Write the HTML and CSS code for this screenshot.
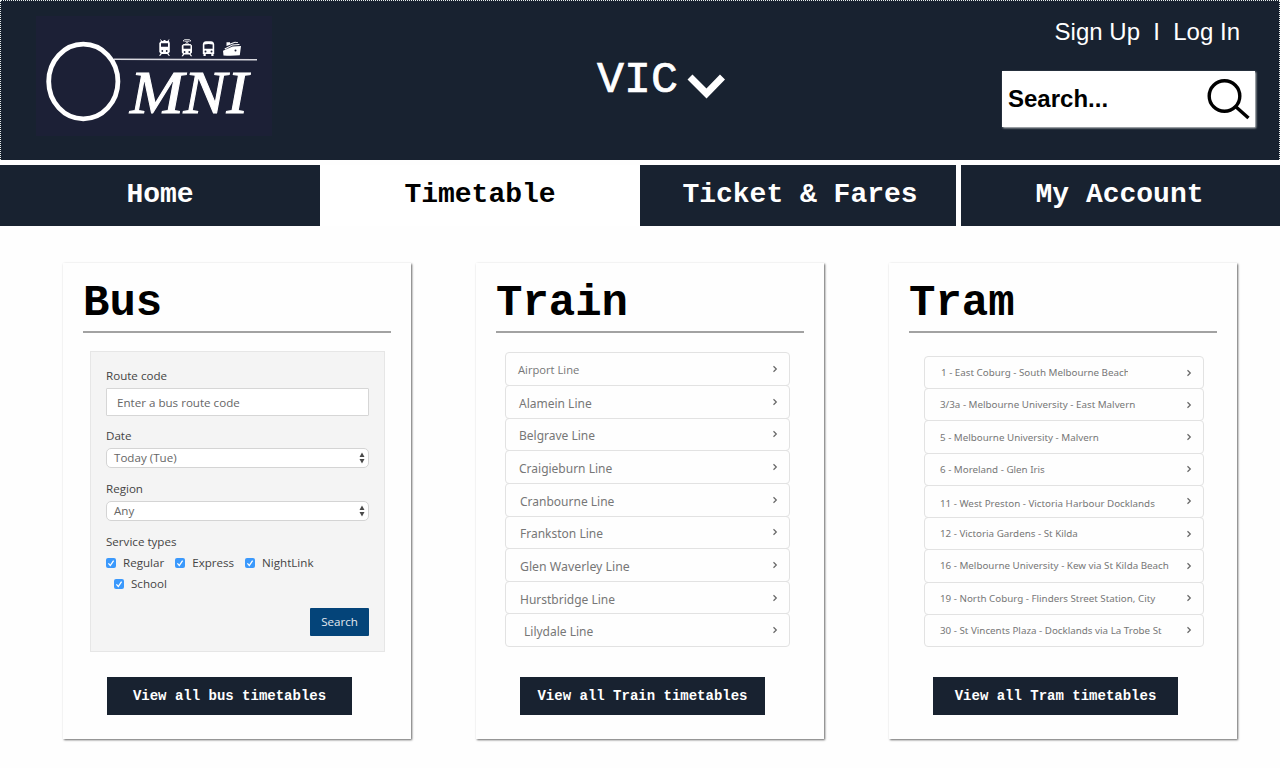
FILE: index.html
```html
<!DOCTYPE html>
<html lang="en">
<head>
<meta charset="utf-8">
<title>OMNI - Timetable</title>
<link rel="stylesheet" href="styles.css">
</head>
<body>
<svg width="0" height="0" class="defs">
  <symbol id="chev" viewBox="0 0 8 10"><path d="M2.500 2.300l2.800 2.700L2.500 7.700" fill="none" stroke="#666" stroke-width="1.2"/></symbol>
  <symbol id="tick" viewBox="0 0 10 10"><rect width="10" height="10" rx="2" fill="#3b99fc"/><path d="M2.400 5.400l1.900 2.100L7.600 2.600" fill="none" stroke="#fff" stroke-width="1.3"/></symbol>
  <symbol id="updown" viewBox="0 0 6 12"><path d="M3 .6L5.500 4.900H.5zM3 11.400L.5 7.100h5z" fill="#4a4a4a"/></symbol>
</svg>
<header class="header">
  <svg class="logo" viewBox="36 16 236 120" width="236" height="120">
    <rect x="36" y="16" width="236" height="120" fill="#1c2036"/>
    <ellipse cx="83.300" cy="81.500" rx="34.600" ry="37.300" fill="none" stroke="#fff" stroke-width="4.800"/>
    <path d="M114 59.300L257 59.800" stroke="#d8d8df" stroke-width="1.500"/>
    <text x="130" y="112.500" class="logo-text" textLength="118" lengthAdjust="spacingAndGlyphs">MNI</text>
    <g fill="#fff">
      <path d="M161 41h8l.8 2v9l-1.500 1.500 1.700 2.300h-1.400L167.300 54h-5.600L160.500 55.800H159l1.600-2.300L159.300 52v-9zM161 43.200v3.600h7v-3.600z" fill-rule="evenodd"/>
      <path d="M161.500 41l-1-1.500M168 41l1-1.500M163.500 40.500h2" stroke="#fff"/>
      <path d="M183.500 44h7l1.500 1.500v7L190.600 54l1.600 2.300h-1.400L189.500 54.500h-5.300L183 56.300h-1.500l1.500-2.300-1.200-1.500v-7zM183.500 45.500v3.200h7v-3.200z" fill-rule="evenodd"/>
      <path d="M184.500 39.500h5l1.500 1.500h-8z" stroke="#fff" stroke-width=".7" fill="none"/><path d="M185.500 41l1.500 1.500-1.500 1.500M188.500 41L187 42.500l1.500 1.500" stroke="#fff" stroke-width=".9" fill="none"/>
      <path d="M206 41.200h5q2.700 0 3.200 3V54h-.7v2h-2.200v-2h-5.600v2h-2.200v-2h-.7v-9.800q.5-3 3.200-3zM204.400 44.500v4.300h8.200v-4.300q-4-1.200-8.200 0z" fill-rule="evenodd"/>
      <path d="M223 50.800l9.500-4.300 8.500-.5-1.200 9.200q-7 .8-16.300.3zM224.500 48.500l8-4 7-.4v1l-7 .4-7.500 3.900zM226.500 46v-3.700h3.500v1.200l5-1.800 3 .5v.8l-3-.2-5 2z"/>
    </g>
    <g fill="#1c2036"><circle cx="162.300" cy="51" r=".9"/><circle cx="166.700" cy="51" r=".9"/><circle cx="184.600" cy="52" r=".9"/><circle cx="189.300" cy="52" r=".9"/><circle cx="205.500" cy="51.500" r="1"/><circle cx="211.500" cy="51.500" r="1"/><circle cx="235.500" cy="50.500" r="1"/></g>
  </svg>
  <div class="state"><span>VIC</span>
    <svg width="38" height="26" viewBox="0 0 38 26"><path d="M3 4L19.500 20.500 35.500 4" fill="none" stroke="#fff" stroke-width="7"/></svg>
  </div>
  <div class="tools">
    <div class="auth"><a>Sign Up</a><span>I</span><a>Log In</a></div>
    <div class="search"><span>Search...</span>
      <svg width="44" height="42" viewBox="0 0 44 42"><circle cx="18.500" cy="18" r="15.300" fill="none" stroke="#000" stroke-width="3.400"/><path d="M29.500 28.500L42.500 40" stroke="#000" stroke-width="3.400"/></svg>
    </div>
  </div>
</header>
<nav class="nav"><a>Home</a><a class="active">Timetable</a><a class="tickets">Ticket &amp; Fares</a><a>My Account</a></nav>
<main class="cards">
  <section class="card">
    <h2>Bus</h2>
    <div class="content">
      <form class="panel">
        <label>Route code</label>
        <div class="input">Enter a bus route code</div>
        <label class="lb-date">Date</label>
        <div class="select">Today (Tue)<svg width="6" height="12"><use href="#updown"/></svg></div>
        <label class="lb-region">Region</label>
        <div class="select">Any<svg width="6" height="12"><use href="#updown"/></svg></div>
        <label class="lb-types">Service types</label>
        <div class="checks">
          <span><svg width="10" height="10"><use href="#tick"/></svg>Regular</span>
          <span><svg width="10" height="10"><use href="#tick"/></svg>Express</span>
          <span><svg width="10" height="10"><use href="#tick"/></svg>NightLink</span>
        </div>
        <div class="checks second"><span><svg width="10" height="10"><use href="#tick"/></svg>School</span></div>
        <div class="submit">Search</div>
      </form>
    </div>
    <a class="button">View all bus timetables</a>
  </section>
  <section class="card">
    <h2>Train</h2>
    <div class="content">
      <ul class="list train">
        <li class="airport"><span>Airport Line</span><svg width="8" height="10"><use href="#chev"/></svg></li>
        <li><span>Alamein Line</span><svg width="8" height="10"><use href="#chev"/></svg></li>
        <li><span>Belgrave Line</span><svg width="8" height="10"><use href="#chev"/></svg></li>
        <li><span>Craigieburn Line</span><svg width="8" height="10"><use href="#chev"/></svg></li>
        <li class="inset"><span>Cranbourne Line</span><svg width="8" height="10"><use href="#chev"/></svg></li>
        <li class="inset"><span>Frankston Line</span><svg width="8" height="10"><use href="#chev"/></svg></li>
        <li class="inset wide"><span>Glen Waverley Line</span><svg width="8" height="10"><use href="#chev"/></svg></li>
        <li class="inset"><span>Hurstbridge Line</span><svg width="8" height="10"><use href="#chev"/></svg></li>
        <li class="lilydale"><span>Lilydale Line</span><svg width="8" height="10"><use href="#chev"/></svg></li>
      </ul>
    </div>
    <a class="button">View all Train timetables</a>
  </section>
  <section class="card">
    <h2>Tram</h2>
    <div class="content">
      <ul class="list tram">
        <li class="clipped"><span>1 - East Coburg - South Melbourne Beach</span><svg width="8" height="10"><use href="#chev"/></svg></li>
        <li><span>3/3a - Melbourne University - East Malvern</span><svg width="8" height="10"><use href="#chev"/></svg></li>
        <li><span>5 - Melbourne University - Malvern</span><svg width="8" height="10"><use href="#chev"/></svg></li>
        <li><span>6 - Moreland - Glen Iris</span><svg width="8" height="10"><use href="#chev"/></svg></li>
        <li class="low"><span>11 - West Preston - Victoria Harbour Docklands</span><svg width="8" height="10"><use href="#chev"/></svg></li>
        <li><span>12 - Victoria Gardens - St Kilda</span><svg width="8" height="10"><use href="#chev"/></svg></li>
        <li><span>16 - Melbourne University - Kew via St Kilda Beach</span><svg width="8" height="10"><use href="#chev"/></svg></li>
        <li><span>19 - North Coburg - Flinders Street Station, City</span><svg width="8" height="10"><use href="#chev"/></svg></li>
        <li><span>30 - St Vincents Plaza - Docklands via La Trobe St</span><svg width="8" height="10"><use href="#chev"/></svg></li>
      </ul>
    </div>
    <a class="button">View all Tram timetables</a>
  </section>
</main>
</body>
</html>
```
FILE: styles.css
```css
* { box-sizing: border-box; }
body { margin: 0; background: #fefefe; height: 768px; overflow: hidden; font-family: "Open Sans", sans-serif; }
.defs { display: block; width: 0; height: 0; }
.header { display: flex; height: 160px; background: #182230; border: 1px dotted #e8eeee; border-bottom: 0; padding: 15px 24px 0 35px; color: #fff; }
.logo { display: block; flex: none; }
.logo-text { font: italic 61px "Liberation Serif", serif; fill: #fff; stroke: #fff; stroke-width: 1px; }
.state { display: flex; margin: 35px 0 0 325px; font: 45px/60px "Courier New", "Liberation Mono", monospace; height: 60px; -webkit-text-stroke: .7px #fff; }
.state svg { margin: 22px 0 0 9px; }
.tools { margin-left: auto; width: 253px; font-family: "Liberation Sans", Arial, sans-serif; font-size: 24px; }
.auth { display: flex; justify-content: flex-end; gap: 13.300px; line-height: 32px; height: 30px; padding-right: 15px; }
.search { display: flex; justify-content: space-between; margin-top: 25px; height: 56px; padding: 7px 5px 0 6px; background: #fff; color: #000; font-weight: bold; line-height: 42px; box-shadow: 1px 1px 2px #d5d8d8; }
.nav { display: grid; grid-template-columns: 320px 320px 316px 319px; margin-top: 5px; height: 61px; font: bold 28px/59px "Courier New", "Liberation Mono", monospace; text-align: center; }
.nav a { background: #182230; color: #fff; white-space: pre; }
.nav .active { background: #fff; color: #000; }
.nav a:last-child { margin-left: 5px; margin-right: -5px; padding-right: 2px; }
.nav .tickets { padding-left: 4px; }
.cards { display: grid; grid-template-columns: repeat(3, 348px); gap: 65px; padding: 37px 0 0 63px; }
.card { height: 476px; background: #fefefe; padding: 0 20px; box-shadow: 1px 1px 2px rgba(0,0,0,.6); }
.card h2 { margin: 0; height: 70px; border-bottom: 2px solid #a2a2a2; font: bold 44px/80px "Courier New", "Liberation Mono", monospace; }
.content { height: 344px; padding-top: 18px; }
.button { display: block; width: 245px; height: 38px; margin-left: 24px; background: #182230; color: #fff; text-align: center; font: bold 14px/38px "Courier New", "Liberation Mono", monospace; }
.panel { width: 295px; height: 301px; margin-left: 7px; background: #f4f4f4; border: 1px solid #e6e6e6; padding: 16px 15px 0; font-size: 11.600px; color: #444; display: flex; flex-direction: column; }
.panel label { height: 20px; line-height: 16px; }
.input { height: 28px; border: 1px solid #d6d6d6; border-radius: 1px; background: #fff; padding-left: 10px; line-height: 27px; color: #666; }
.panel .lb-date { margin-top: 12px; height: 20px; }
.select { display: flex; justify-content: space-between; height: 20px; border: 1px solid #d4d4d4; border-radius: 5px; background: #fff; padding: 0 3px 0 7px; line-height: 18px; color: #666; }
.select svg { margin-top: 3px; }
.panel .lb-region, .panel .lb-types { margin-top: 13px; height: 20px; }
.panel .lb-types { height: 18px; }
.checks { display: flex; height: 21px; line-height: 21px; }
.checks span { display: flex; align-items: center; gap: 7px; margin-right: 11px; }
.second { padding-left: 8px; }
.submit { align-self: flex-end; margin-top: 14px; width: 59px; height: 28px; background: #044479; border-radius: 1px; color: #e2e8ee; text-align: center; line-height: 28px; }
.list { list-style: none; margin: 1px 0 0 9px; padding: 0 0 2px; width: 285px; height: 296px; display: grid; grid-template-rows: 33px repeat(8, 1fr); font: 12px "Noto Sans", sans-serif; color: #777; }
.list li { display: flex; align-items: center; justify-content: space-between; border: 1px solid #e2e2e2; margin-bottom: -1px; border-radius: 4px; padding: 0 10px 0 13px; white-space: pre; }
.train span { padding-top: 3px; }
.train .airport span { font: 11.200px "Open Sans", sans-serif; padding: 0; margin-left: -1px; }
.train .inset { padding-left: 14px; }
.train .wide { font-size: 12.300px; }
.train .lilydale { padding-left: 18px; }
.tram { margin: 5px 0 0 15px; width: 280px; height: 292px; grid-template-rows: repeat(9, 1fr); font-size: 9.800px; }
.tram li { padding-left: 15px; }
.tram .low span { padding-top: 4px; }
.tram .clipped { padding-left: 16px; }
.clipped span { width: 187px; overflow: hidden; }
```
